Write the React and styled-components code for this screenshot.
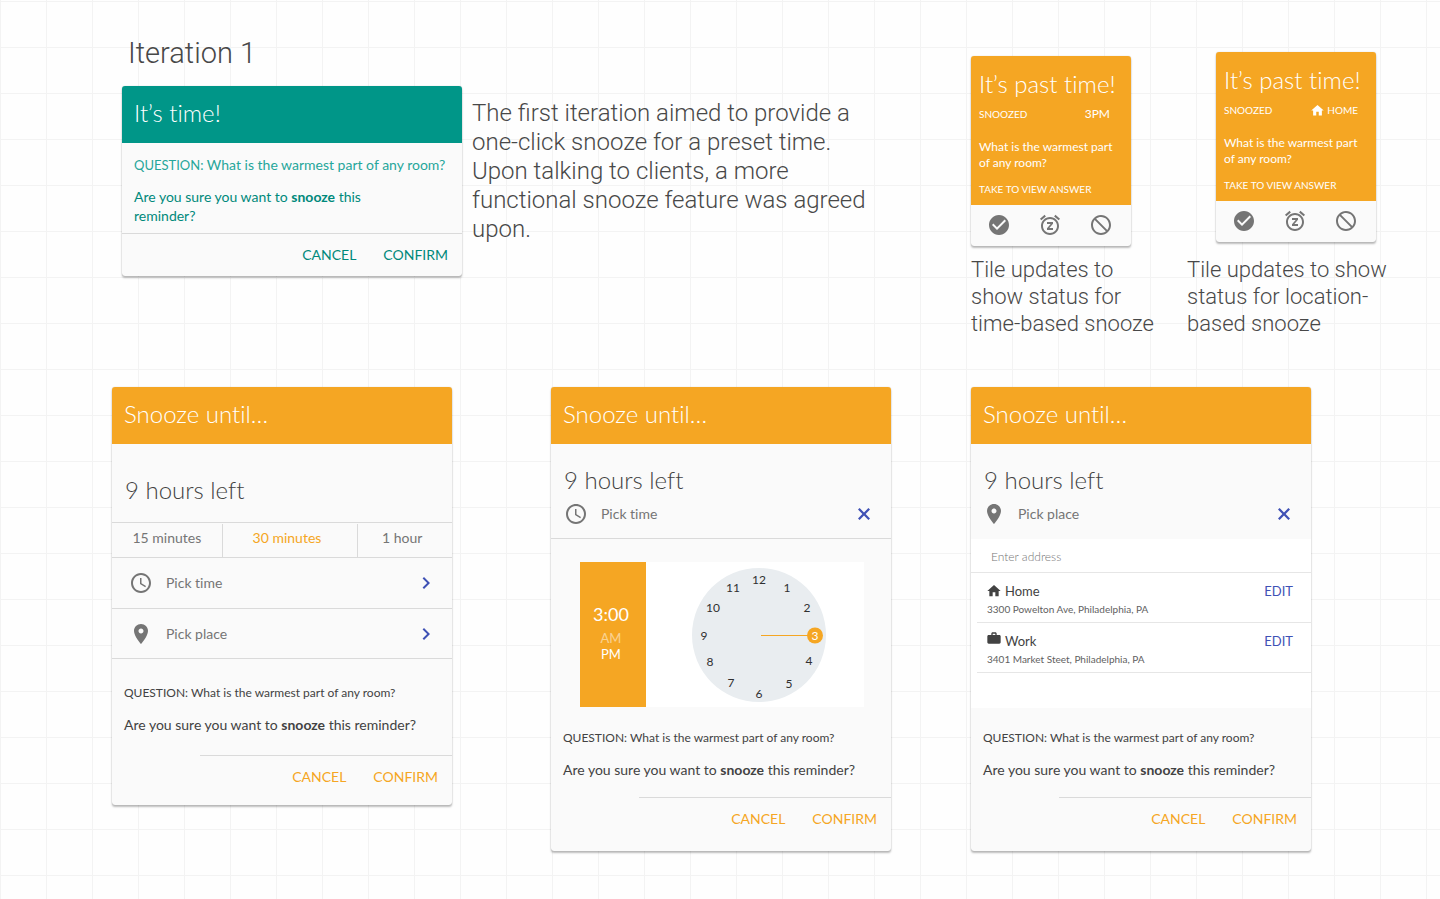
import React from 'react';
import styled, { createGlobalStyle, css } from 'styled-components';

const ORANGE = '#f5a623';
const TEAL = '#009688';
const INDIGO = '#3f51b5';
const GREY = '#757575';
const INK = '#424242';
const RULE = '#dadada';

const GlobalStyle = createGlobalStyle`
  * { box-sizing: border-box; }
  body {
    margin: 0;
    color: ${INK};
    background-color: #fefefe;
    background-image:
      linear-gradient(to right, #f3f3f3 1px, transparent 1px),
      linear-gradient(to bottom, #f3f3f3 1px, transparent 1px);
    background-size: 46px 46px;
    background-position: 0 1px;
    font-family: Lato, sans-serif;
    font-size: 14px;
    line-height: 20px;
    font-variant-ligatures: none;
  }
  h1, h2, h3, p, ul { margin: 0; padding: 0; }
  button {
    margin: 0;
    padding: 0;
    border: 0;
    background: none;
    font: inherit;
    color: inherit;
    cursor: pointer;
  }
  svg { display: block; }
`;

const Page = styled.main`
  display: grid;
  grid-template-columns: 439fr 420fr 469fr;
  row-gap: 50px;
  align-items: start;
  min-height: 100vh;
  align-content: start;
  padding: 36px 0 47px 112px;
`;

/* Intro */

const Intro = styled.section`
  grid-column: span 2;
  padding-left: 10px;
`;

const PageTitle = styled.h1`
  padding-left: 6px;
  margin-bottom: 16px;
  font: 300 29px/34px Roboto, sans-serif;
  color: #484848;
`;

const IntroRow = styled.div`
  display: flex;
  align-items: flex-start;
  gap: 10px;
`;

const IntroText = styled.p`
  flex: 1;
  max-width: 400px;
  padding-top: 13px;
  font: 300 24px/29px Roboto, sans-serif;
  color: #484848;
`;

/* Cards */

const Surface = styled.article`
  display: flex;
  flex-direction: column;
  overflow: hidden;
  border-radius: 3px;
  background: #fafafa;
  box-shadow: 0 0 1px rgba(0, 0, 0, 0.3), 0 2px 2px rgba(0, 0, 0, 0.26);
`;

const Card = styled(Surface)`
  width: 100%;
  max-width: 340px;
`;

const IntroCard = styled(Card)`
  flex: 0 0 340px;
`;

const CardHeader = styled.h2`
  padding: 12px 12px 15px;
  background: ${(p) => (p.$tone === 'teal' ? TEAL : ORANGE)};
  color: #fff;
  font-size: 24px;
  font-weight: 300;
  line-height: 30px;
`;

const Prompt = styled.div`
  display: flex;
  flex-direction: column;
  gap: 12px;
  padding: ${(p) => (p.$roomy ? '24px 12px 20px' : '20px 12px 17px')};
`;

const TealPrompt = styled(Prompt)`
  padding: 12px 12px 8px;
  line-height: 19px;
  color: #00897b;
`;

const Question = styled.p`
  font-size: 12px;
`;

const TealQuestion = styled.p`
  white-space: nowrap;
  color: #26a69a;
`;

const QuestionLabel = styled.span`
  font-size: 13px;
`;

const Confirmation = styled.p`
  max-width: ${(p) => (p.$narrow ? '260px' : 'none')};
`;

const Actions = styled.footer`
  display: flex;
  justify-content: flex-end;
  gap: 27px;
  margin-left: ${(p) => (p.$full ? 0 : 88)}px;
  padding: 11px 14px ${(p) => p.$bottom}px 0;
  border-top: 1px solid ${RULE};
  color: ${(p) => (p.$tone === 'teal' ? '#00897b' : ORANGE)};
`;

const Remaining = styled.h3`
  padding: ${(p) => (p.$spacious ? '31px 13px 17px' : '21px 13px 4px')};
  font-size: 24px;
  font-weight: 300;
  line-height: 30px;
`;

const Presets = styled.div`
  display: flex;
  padding-top: 1px;
  border-top: 1px solid ${RULE};
`;

const Preset = styled.button`
  flex: ${(p) => p.$share} 1 0;
  height: 33px;
  padding-bottom: 6px;
  color: ${(p) => (p.$active ? ORANGE : GREY)};

  & + & {
    padding-right: 6px;
    border-left: 1px solid ${RULE};
  }
`;

const PickRow = styled.button`
  display: flex;
  align-items: center;
  gap: 13px;
  width: 100%;
  height: 51px;
  padding: 0 14px 0 17px;
  border-top: 1px solid ${RULE};
  color: ${GREY};
  text-align: left;

  &:last-of-type { border-bottom: 1px solid ${RULE}; }
`;

const PickLabel = styled.span`
  flex: 1;
`;

const OpenPicker = styled.div`
  display: flex;
  align-items: center;
  gap: 13px;
  height: 40px;
  padding: 0 15px 10px 13px;
  color: ${GREY};
  ${(p) => (p.$ruled
    ? css`border-bottom: 1px solid ${RULE};`
    : css`padding-left: 11px; gap: 12px;`)}
`;

/* Time picker */

const TimePicker = styled.div`
  display: flex;
  height: 145px;
  margin: 23px 27px 1px 29px;
  background: #fff;
`;

const TimeReadout = styled.div`
  display: flex;
  flex-direction: column;
  align-items: center;
  justify-content: center;
  width: 66px;
  padding: 0 4px 6px 0;
  background: ${ORANGE};
  color: #fff;
`;

const Time = styled.strong`
  margin-bottom: 4px;
  font-size: 18px;
  font-weight: 400;
  line-height: 24px;
`;

const Meridiem = styled.button`
  font-size: 13px;
  line-height: 16px;
  opacity: ${(p) => (p.$active ? 1 : 0.5)};
`;

const DialWrap = styled.div`
  flex: 1;
`;

/* Place picker */

const Places = styled.div`
  padding-bottom: 35px;
  background: #fff;
`;

const AddressInput = styled.input`
  display: block;
  width: 100%;
  height: 34px;
  padding: 2px 20px 0;
  border: 0;
  border-bottom: 1px solid #e6e6e6;
  background: transparent;
  font: 300 12px/20px Lato, sans-serif;

  &::placeholder { color: #757575; opacity: 1; }
`;

const PlaceList = styled.ul`
  padding-left: 6px;
  list-style: none;
`;

const Place = styled.li`
  padding: 8px 18px 5px 9px;
  border-bottom: 1px solid #e6e6e6;
`;

const PlaceTop = styled.div`
  display: flex;
  align-items: center;
  gap: 3px;
`;

const PlaceIcon = styled.span`
  align-self: ${(p) => (p.$raised ? 'flex-start' : 'center')};
`;

const PlaceName = styled.span`
  flex: 1;
  font-size: 13px;
`;

const EditButton = styled.button`
  color: ${INDIGO};
  font-size: 13px;
`;

const PlaceAddress = styled.p`
  padding-left: 1px;
  color: #616161;
  font-size: 10px;
  line-height: 16px;
`;

/* Status tiles */

const Tiles = styled.section`
  display: flex;
  gap: 26px;
`;

const TileColumn = styled.figure`
  width: ${(p) => (p.$wide ? 210 : 190)}px;
  margin: 0;
  padding-top: ${(p) => (p.$wide ? 16 : 20)}px;
`;

const Tile = styled(Surface)`
  width: 160px;
  margin-left: ${(p) => (p.$inset ? 29 : 0)}px;
`;

const TileBody = styled.div`
  padding: 13px 8px 7px;
  background: ${ORANGE};
  color: #fff;
`;

const TileTitle = styled.h2`
  font-size: 24px;
  font-weight: 300;
  line-height: 30px;
  white-space: nowrap;
`;

const TileStatus = styled.div`
  display: flex;
  align-items: center;
  justify-content: space-between;
  height: 20px;
  margin: 5px 0 15px;
  padding-right: ${(p) => (p.$place ? 10 : 13)}px;
  font-size: 10px;
`;

const TileTime = styled.span`
  font-size: 12px;
`;

const TilePlace = styled.span`
  display: flex;
  align-items: center;
  gap: 2px;
`;

const TileQuestion = styled.p`
  margin-bottom: 9px;
  font-size: 12px;
  line-height: 16px;
`;

const TileHint = styled.p`
  font-size: 10px;
  line-height: 18px;
`;

const TileActions = styled.div`
  display: flex;
  align-items: center;
  gap: 27px;
  height: 41px;
  padding: 0 0 2px 16px;
  color: ${GREY};
`;

const Caption = styled.figcaption`
  margin-top: ${(p) => (p.$wide ? 14 : 10)}px;
  font: 300 22px/27px Roboto, sans-serif;
  color: #484848;
`;

/* Icons */

const PATHS = {
  check: 'M12 2C6.48 2 2 6.48 2 12s4.48 10 10 10 10-4.48 10-10S17.52 2 12 2zm-2 15l-5-5 1.41-1.41L10 14.17l7.59-7.59L19 8l-9 9z',
  snooze: 'M7.88 3.39L6.6 1.86 2 5.71l1.29 1.53 4.59-3.85zM22 5.72l-4.6-3.86-1.29 1.53 4.6 3.86L22 5.72zM12 4c-4.97 0-9 4.03-9 9s4.02 9 9 9c4.97 0 9-4.03 9-9s-4.03-9-9-9zm0 16c-3.87 0-7-3.13-7-7s3.13-7 7-7 7 3.13 7 7-3.13 7-7 7zm-3-9h3.63L9 15.2V17h6v-2h-3.63L15 10.8V9H9v2z',
  block: 'M12 2C17.52 2 22 6.48 22 12s-4.48 10-10 10S2 17.52 2 12 6.48 2 12 2zM20 12c0-4.42-3.58-8-8-8-1.85 0-3.55.63-4.9 1.69L18.31 16.9C19.37 15.55 20 13.85 20 12zM12 20c1.85 0 3.55-.63 4.9-1.69L5.69 7.1C4.63 8.45 4 10.15 4 12c0 4.42 3.58 8 8 8z',
  clock: 'M11.99 2C6.47 2 2 6.48 2 12s4.47 10 9.99 10C17.52 22 22 17.52 22 12S17.52 2 11.99 2zM12 20c-4.42 0-8-3.58-8-8s3.58-8 8-8 8 3.58 8 8-3.58 8-8 8zm.5-13H11v6l5.25 3.15.75-1.23-4.5-2.67z',
  pin: 'M12 2C8.13 2 5 5.13 5 9c0 5.25 7 13 7 13s7-7.75 7-13c0-3.87-3.13-7-7-7zm0 9.5c-1.38 0-2.5-1.12-2.5-2.5s1.12-2.5 2.5-2.5 2.5 1.12 2.5 2.5-1.12 2.5-2.5 2.5z',
  chevron: 'M10 6L8.59 7.41 13.17 12l-4.58 4.59L10 18l6-6z',
  close: 'M18 7.6L16.4 6 12 10.4 7.6 6 6 7.6l4.4 4.4L6 16.4 7.6 18l4.4-4.4 4.4 4.4 1.6-1.6-4.4-4.4z',
  home: 'M10 20v-6h4v6h5v-8h3L12 3 2 12h3v8z',
  work: 'M20 6h-4V4c0-1.11-.89-2-2-2h-4c-1.11 0-2 .89-2 2v2H4c-1.11 0-2 .89-2 2v9c0 1.11.89 2 2 2h16c1.11 0 2-.89 2-2V8c0-1.11-.89-2-2-2zm-6 0h-4V4h4v2z',
};

const Glyph = styled.svg`
  flex: none;
  fill: ${(p) => p.$color || 'currentColor'};
`;

function Icon({ name, size = 24, color }) {
  return (
    <Glyph viewBox="0 0 24 24" width={size} height={size} $color={color} aria-hidden="true">
      <path fillRule="evenodd" d={PATHS[name]} />
    </Glyph>
  );
}

const DIAL_NUMBERS = [
  [12, 113, 18], [1, 141, 26], [2, 161, 46], [4, 163, 99], [5, 143, 122], [6, 113, 132],
  [7, 85, 121], [8, 64, 100], [9, 58, 74], [10, 67, 46], [11, 87, 26],
];

const DialNumber = styled.text`
  fill: ${(p) => (p.$active ? '#fff' : '#303030')};
  font: 12px Lato, sans-serif;
  text-anchor: middle;
`;

function Dial() {
  return (
    <DialWrap>
      <svg viewBox="0 0 218 145" width="100%" height="145" role="img" aria-label="Clock set to 3">
        <circle cx="113" cy="73" r="67" fill="#e9edf0" />
        <path d="M115 73.500H162" stroke={ORANGE} />
        <circle cx="169" cy="73.500" r="8" fill={ORANGE} />
        {DIAL_NUMBERS.map(([n, x, y]) => (
          <DialNumber key={n} x={x} y={y + 4}>{n}</DialNumber>
        ))}
        <DialNumber x="169" y="78" $active>3</DialNumber>
      </svg>
    </DialWrap>
  );
}

function SnoozePrompt({ roomy }) {
  return (
    <>
      <Prompt $roomy={roomy}>
        <Question>QUESTION: What is the warmest part of any room?</Question>
        <Confirmation>
          Are you sure you want to <b>snooze</b> this reminder?
        </Confirmation>
      </Prompt>
      <Actions $bottom={roomy ? 18 : 22}>
        <button type="button">CANCEL</button>
        <button type="button">CONFIRM</button>
      </Actions>
    </>
  );
}

function StatusTile({ place, children, caption }) {
  return (
    <TileColumn $wide={place}>
      <Tile $inset={place}>
        <TileBody>
          <TileTitle>It’s past time!</TileTitle>
          <TileStatus $place={place}>
            <span>SNOOZED</span>
            {children}
          </TileStatus>
          <TileQuestion>What is the warmest part of any room?</TileQuestion>
          <TileHint>TAKE TO VIEW ANSWER</TileHint>
        </TileBody>
        <TileActions>
          <button type="button" aria-label="Done"><Icon name="check" /></button>
          <button type="button" aria-label="Snooze"><Icon name="snooze" /></button>
          <button type="button" aria-label="Dismiss"><Icon name="block" /></button>
        </TileActions>
      </Tile>
      <Caption $wide={place}>{caption}</Caption>
    </TileColumn>
  );
}

const PLACES = [
  { name: 'Home', icon: 'home', address: '3300 Powelton Ave, Philadelphia, PA' },
  { name: 'Work', icon: 'work', address: '3401 Market Steet, Philadelphia, PA' },
];

export default function App() {
  return (
    <>
      <GlobalStyle />
      <Page>
        <Intro>
          <PageTitle>Iteration 1</PageTitle>
          <IntroRow>
            <IntroCard>
              <CardHeader $tone="teal">It’s time!</CardHeader>
              <TealPrompt>
                <TealQuestion>
                  <QuestionLabel>QUESTION:</QuestionLabel> What is the warmest part of any room?
                </TealQuestion>
                <Confirmation $narrow>
                  Are you sure you want to <b>snooze</b> this reminder?
                </Confirmation>
              </TealPrompt>
              <Actions $tone="teal" $full $bottom={11}>
                <button type="button">CANCEL</button>
                <button type="button">CONFIRM</button>
              </Actions>
            </IntroCard>
            <IntroText>
              The first iteration aimed to provide a one-click snooze for a preset time. Upon
              talking to clients, a more functional snooze feature was agreed upon.
            </IntroText>
          </IntroRow>
        </Intro>

        <Tiles>
          <StatusTile caption="Tile updates to show status for time-based snooze">
            <TileTime>3PM</TileTime>
          </StatusTile>
          <StatusTile place caption="Tile updates to show status for location-based snooze">
            <TilePlace><Icon name="home" size={15} />HOME</TilePlace>
          </StatusTile>
        </Tiles>

        <Card>
          <CardHeader>Snooze until…</CardHeader>
          <Remaining $spacious>9 hours left</Remaining>
          <Presets>
            <Preset type="button" $share={110}>15 minutes</Preset>
            <Preset type="button" $share={129} $active>30 minutes</Preset>
            <Preset type="button" $share={88}>1 hour</Preset>
          </Presets>
          <div>
            <PickRow type="button">
              <Icon name="clock" />
              <PickLabel>Pick time</PickLabel>
              <Icon name="chevron" color={INDIGO} />
            </PickRow>
            <PickRow type="button">
              <Icon name="pin" />
              <PickLabel>Pick place</PickLabel>
              <Icon name="chevron" color={INDIGO} />
            </PickRow>
          </div>
          <SnoozePrompt roomy />
        </Card>

        <Card>
          <CardHeader>Snooze until…</CardHeader>
          <Remaining>9 hours left</Remaining>
          <OpenPicker $ruled>
            <Icon name="clock" />
            <PickLabel>Pick time</PickLabel>
            <button type="button" aria-label="Close"><Icon name="close" color={INDIGO} /></button>
          </OpenPicker>
          <TimePicker>
            <TimeReadout>
              <Time>3:00</Time>
              <Meridiem type="button">AM</Meridiem>
              <Meridiem type="button" $active>PM</Meridiem>
            </TimeReadout>
            <Dial />
          </TimePicker>
          <SnoozePrompt />
        </Card>

        <Card>
          <CardHeader>Snooze until…</CardHeader>
          <Remaining>9 hours left</Remaining>
          <OpenPicker>
            <Icon name="pin" />
            <PickLabel>Pick place</PickLabel>
            <button type="button" aria-label="Close"><Icon name="close" color={INDIGO} /></button>
          </OpenPicker>
          <Places>
            <AddressInput type="text" placeholder="Enter address" aria-label="Enter address" />
            <PlaceList>
              {PLACES.map((place) => (
                <Place key={place.name}>
                  <PlaceTop>
                    <PlaceIcon $raised={place.icon === 'work'}>
                      <Icon name={place.icon} size={16} />
                    </PlaceIcon>
                    <PlaceName>{place.name}</PlaceName>
                    <EditButton type="button">EDIT</EditButton>
                  </PlaceTop>
                  <PlaceAddress>{place.address}</PlaceAddress>
                </Place>
              ))}
            </PlaceList>
          </Places>
          <SnoozePrompt />
        </Card>
      </Page>
    </>
  );
}
